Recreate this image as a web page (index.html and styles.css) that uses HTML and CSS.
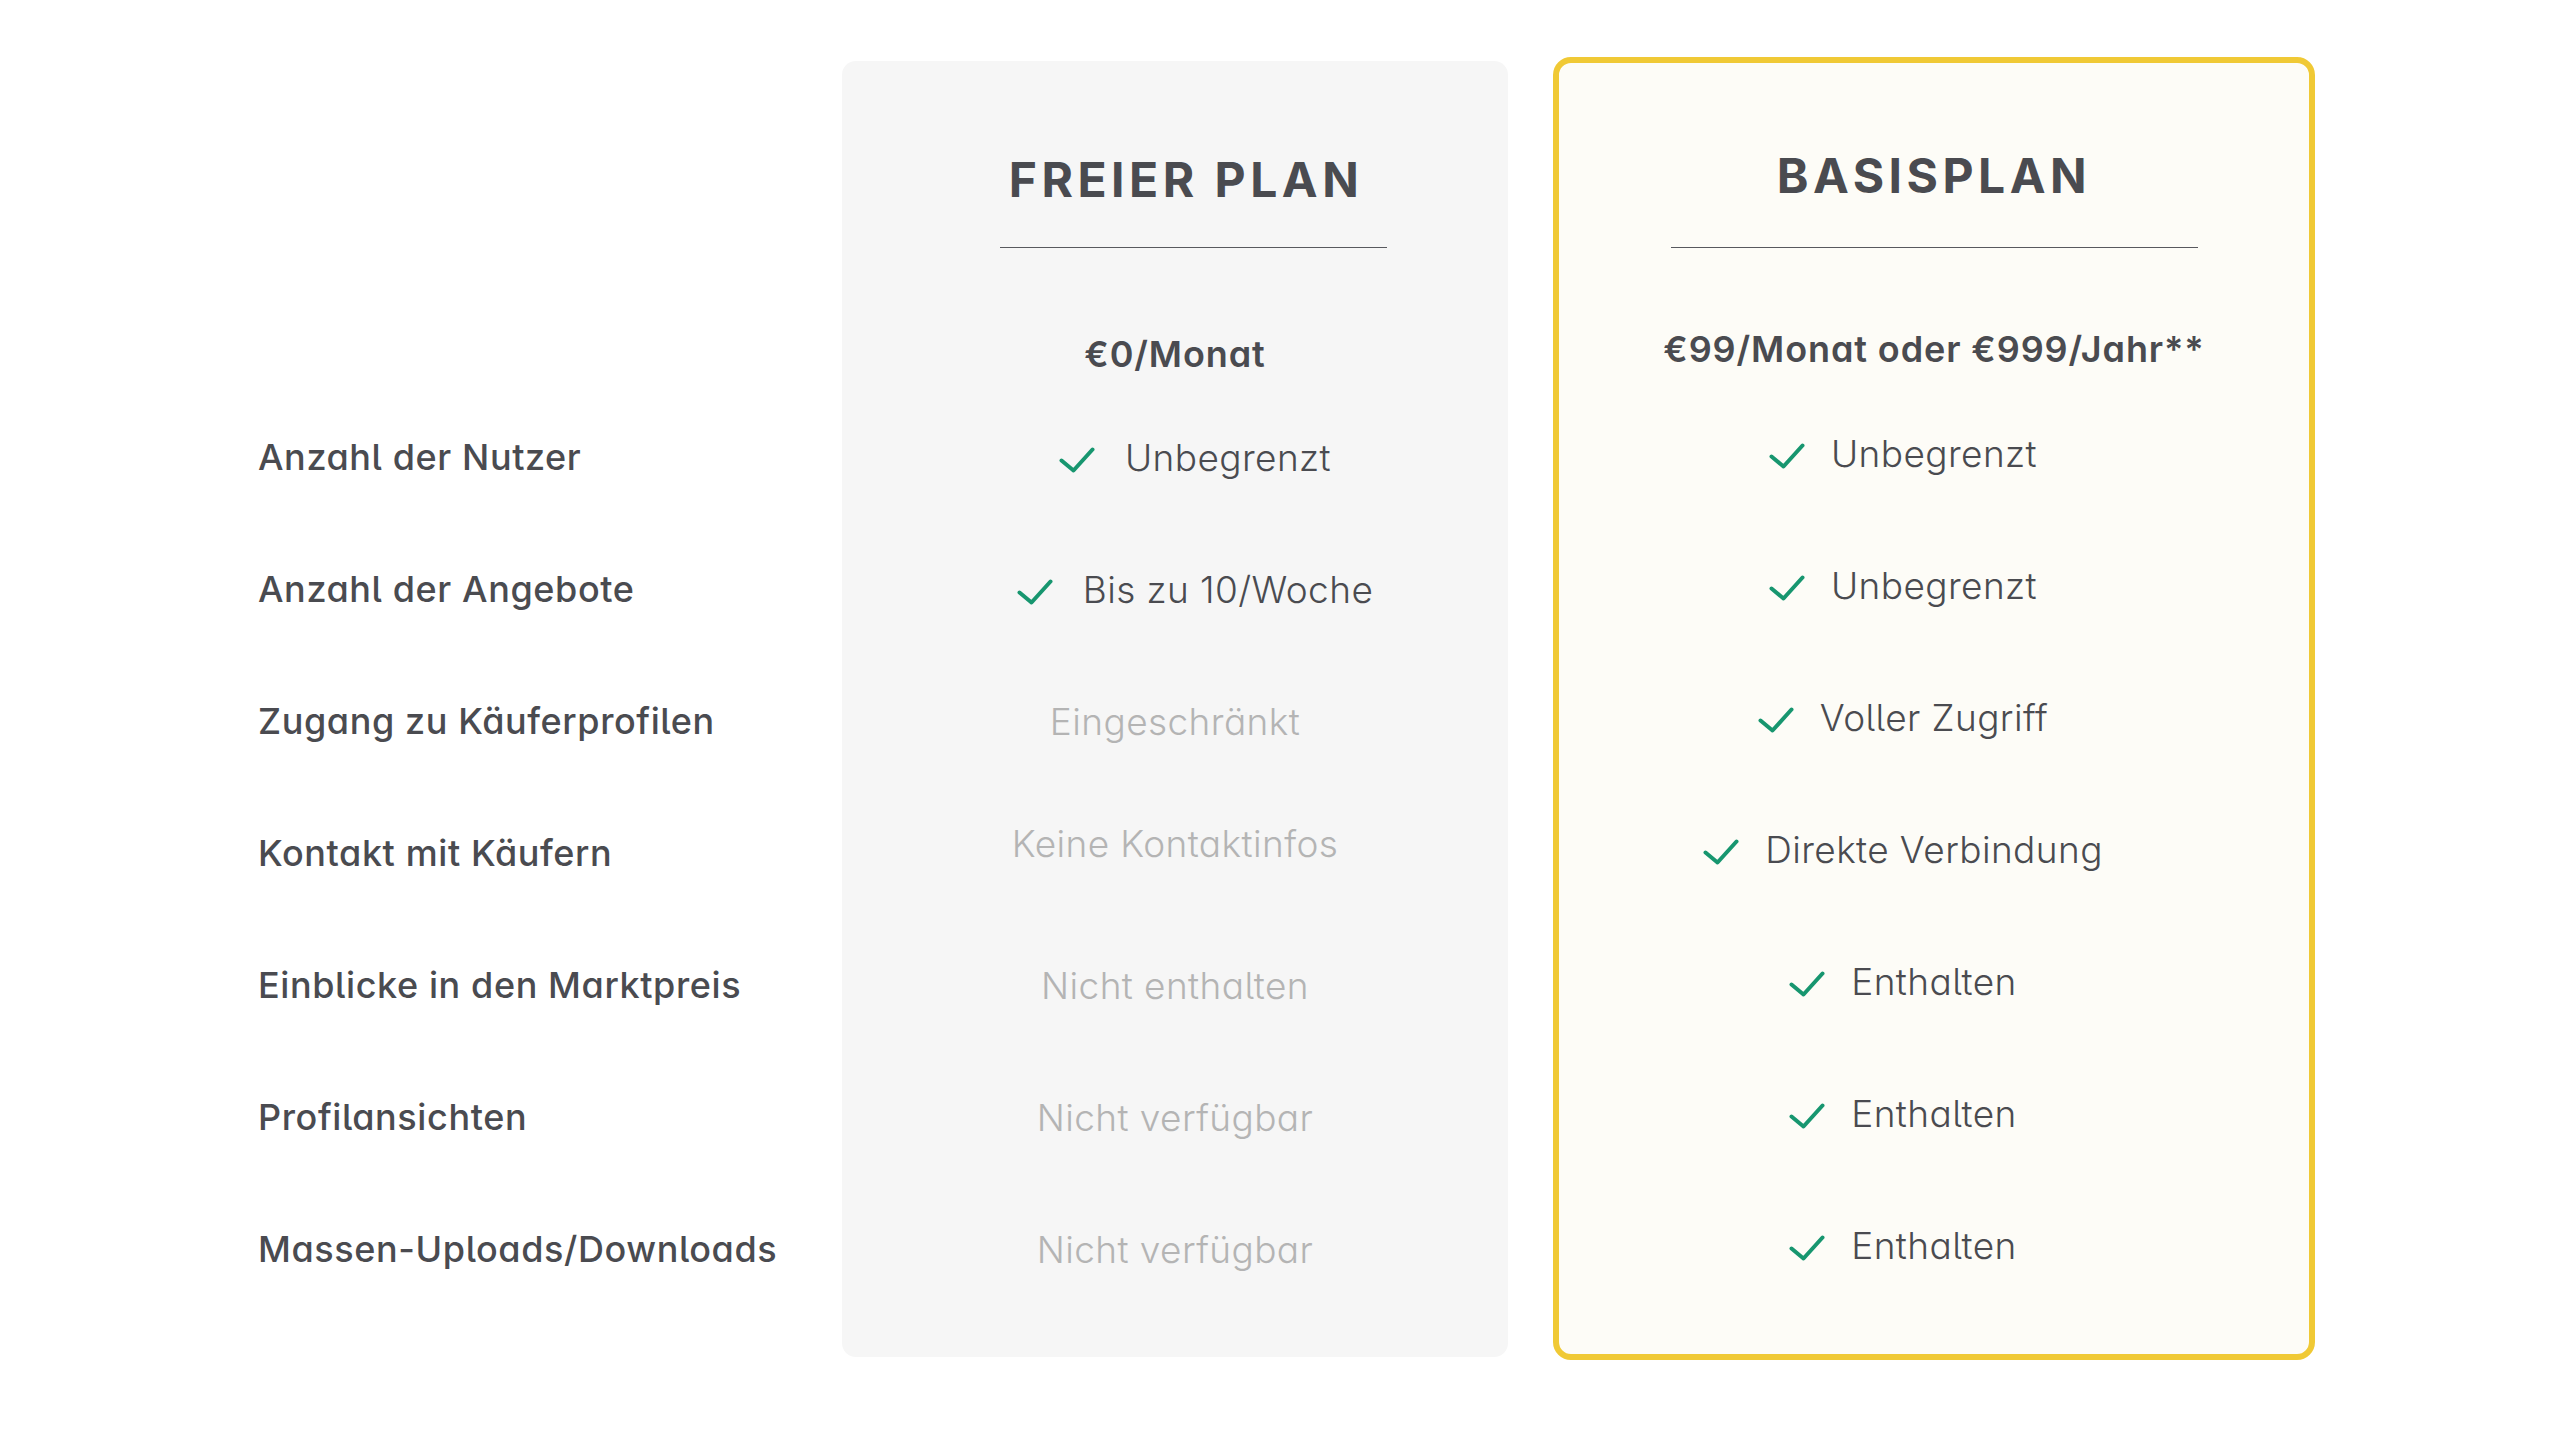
FILE: index.html
```html
<!DOCTYPE html>
<html lang="de">
<head>
  <meta charset="UTF-8">
  <meta name="viewport" content="width=device-width, initial-scale=1.0">
  <title>Preispläne</title>
  <link rel="stylesheet" href="styles.css">
</head>
<body>
  <svg class="sprite" aria-hidden="true">
    <symbol id="tick" viewBox="0 0 36 26">
      <path d="M2.5 13.5 L14.5 23.5 L33.5 2.5" fill="none" stroke="currentColor" stroke-width="4" stroke-linecap="round" stroke-linejoin="round"/>
    </symbol>
  </svg>

  <div class="pricing">
    <ul class="features">
      <li class="row">Anzahl der Nutzer</li>
      <li class="row">Anzahl der Angebote</li>
      <li class="row">Zugang zu Käuferprofilen</li>
      <li class="row">Kontakt mit Käufern</li>
      <li class="row">Einblicke in den Marktpreis</li>
      <li class="row">Profilansichten</li>
      <li class="row">Massen-Uploads/Downloads</li>
    </ul>

    <div class="plan plan-free">
      <div class="plan-head">
        <h2 class="plan-title">FREIER PLAN</h2>
        <hr class="plan-rule">
        <p class="plan-price">€0/Monat</p>
      </div>
      <ul class="plan-list">
        <li class="row"><span class="val val-check"><svg class="tick"><use href="#tick"/></svg>Unbegrenzt</span></li>
        <li class="row"><span class="val val-check"><svg class="tick"><use href="#tick"/></svg>Bis zu 10/Woche</span></li>
        <li class="row"><span class="val val-muted">Eingeschränkt</span></li>
        <li class="row row-up"><span class="val val-muted">Keine Kontaktinfos</span></li>
        <li class="row"><span class="val val-muted">Nicht enthalten</span></li>
        <li class="row"><span class="val val-muted">Nicht verfügbar</span></li>
        <li class="row"><span class="val val-muted">Nicht verfügbar</span></li>
      </ul>
    </div>

    <div class="plan plan-basic">
      <div class="plan-head">
        <h2 class="plan-title">BASISPLAN</h2>
        <hr class="plan-rule">
        <p class="plan-price">€99/Monat oder €999/Jahr**</p>
      </div>
      <ul class="plan-list">
        <li class="row"><span class="val val-check"><svg class="tick"><use href="#tick"/></svg>Unbegrenzt</span></li>
        <li class="row"><span class="val val-check"><svg class="tick"><use href="#tick"/></svg>Unbegrenzt</span></li>
        <li class="row"><span class="val val-check"><svg class="tick"><use href="#tick"/></svg>Voller Zugriff</span></li>
        <li class="row"><span class="val val-check"><svg class="tick"><use href="#tick"/></svg>Direkte Verbindung</span></li>
        <li class="row"><span class="val val-check"><svg class="tick"><use href="#tick"/></svg>Enthalten</span></li>
        <li class="row"><span class="val val-check"><svg class="tick"><use href="#tick"/></svg>Enthalten</span></li>
        <li class="row"><span class="val val-check"><svg class="tick"><use href="#tick"/></svg>Enthalten</span></li>
      </ul>
    </div>
  </div>
</body>
</html>
```
FILE: styles.css
```css
* {
  margin: 0;
  padding: 0;
  box-sizing: border-box;
}

body {
  background: #fff;
  color: #4a4b50;
  font-family: 'Inter', 'Noto Sans', sans-serif;
  font-feature-settings: 'cv11', 'cv05';
}

.sprite {
  display: none;
}

ul {
  list-style: none;
}

.pricing {
  display: flex;
  align-items: flex-start;
  padding: 57px 0 0 258px;
}

.row {
  height: 132px;
  display: flex;
  align-items: center;
}

.row-up {
  padding-bottom: 20px;
}

/* feature labels */
.features {
  width: 584px;
  padding-top: 335px;
  font-size: 36px;
  font-weight: 500;
  line-height: 1.2;
  letter-spacing: 0.6px;
}

/* plan cards */
.plan {
  text-align: center;
}

.plan-free {
  width: 666px;
  margin-top: 4px;
  padding-bottom: 41px;
  background: #f6f6f6;
  border-radius: 14px;
}

.plan-basic {
  width: 762px;
  margin-left: 45px;
  padding-bottom: 42px;
  background: #fdfcf7;
  border: 6px solid #f0c935;
  border-radius: 18px;
}

.plan-title {
  height: 60px;
  line-height: 60px;
  font-size: 48px;
  font-weight: 700;
  letter-spacing: 4.5px;
}

.plan-rule {
  height: 0;
  border: none;
  border-top: 1px solid #58595e;
}

.plan-price {
  height: 50px;
  line-height: 50px;
  font-size: 36px;
  font-weight: 600;
  letter-spacing: 0.9px;
}

.plan-free .plan-head {
  padding-top: 89px;
  margin-bottom: 13px;
}

.plan-free .plan-title {
  padding-left: 22px;
}

.plan-free .plan-rule {
  width: 387px;
  margin: 37px 0 0 158px;
}

.plan-free .plan-price {
  margin-top: 81px;
}

.plan-basic .plan-head {
  padding-top: 83px;
  margin-bottom: 14px;
}

.plan-basic .plan-rule {
  width: 527px;
  margin: 41px auto 0;
}

.plan-basic .plan-price {
  margin-top: 76px;
}

.plan-list .row {
  justify-content: center;
}

.val {
  font-size: 37px;
  font-weight: 300;
  line-height: 1.2;
  letter-spacing: 0.4px;
}

.val-muted {
  color: #b4b4b4;
}

.val-check {
  display: inline-flex;
  align-items: center;
}

.tick {
  width: 36px;
  height: 26px;
  flex-shrink: 0;
  color: #17966f;
  margin-top: 4px;
}

.plan-free .val-check {
  padding-left: 40px;
}

.plan-free .tick {
  margin-right: 30px;
}

/* basic plan: text stays centred, tick hangs to its left */
.plan-basic .tick {
  margin-left: -62px;
  margin-right: 26px;
}
```
